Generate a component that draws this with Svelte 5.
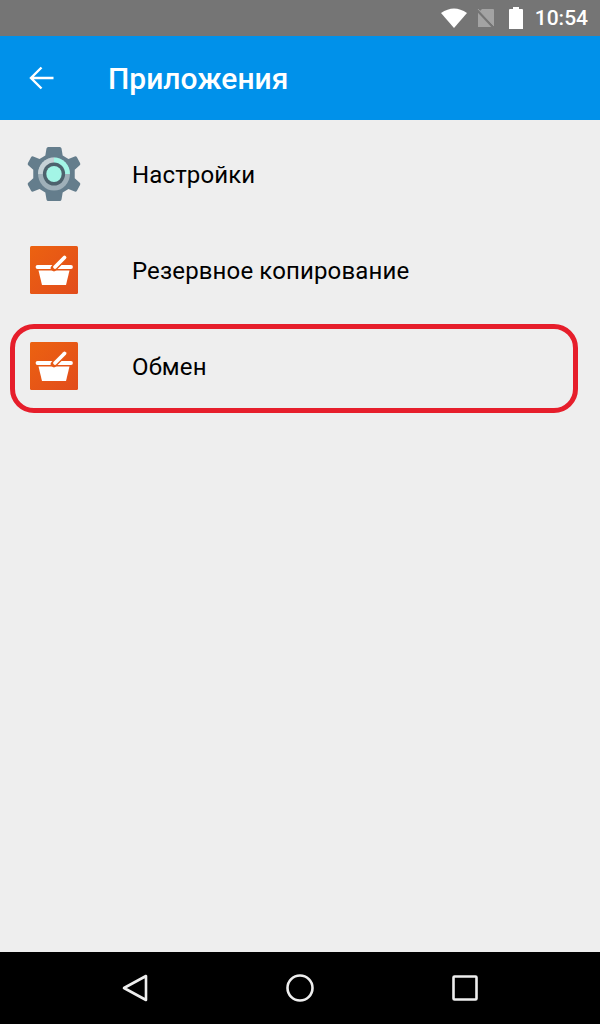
<script>
  const apps = [
    { name: "Настройки", icon: "gear" },
    { name: "Резервное копирование", icon: "basket" },
    { name: "Обмен", icon: "basket", marked: true },
  ];
</script>

<div class="screen">
  <div class="status">
    <svg class="wifi" width="26" height="20" viewBox="0 0 26 20">
      <path d="M13 20 L0 5 Q13 -4 26 5 Z" fill="#fff" />
    </svg>
    <svg class="sim" width="17" height="18" viewBox="0 0 17 18">
      <path d="M5 0 H16 Q17 0 17 1 V18 H1 V4 Z" fill="#a3a3a3" />
      <path d="M-1 0 L17 19" stroke="#757575" stroke-width="2.500" />
      <path d="M0 -1 L17 17" stroke="#a3a3a3" stroke-width="1" />
    </svg>
    <svg class="battery" width="14" height="22" viewBox="0 0 14 22">
      <path d="M4 2 V0 H10 V2 H13 Q14 2 14 3 V22 H0 V3 Q0 2 1 2 Z" fill="#fff" />
    </svg>
    <span class="clock">10:54</span>
  </div>

  <header class="appbar">
    <svg width="26" height="24" viewBox="0 0 26 24">
      <path d="M24.500 12 H3 M12.500 1.500 L2 12 L12.500 22.500" fill="none" stroke="#fff" stroke-width="2.400" />
    </svg>
    <h1>Приложения</h1>
  </header>

  <main class="list">
    {#each apps as app}
      <div class="row" class:marked={app.marked}>
        <div class="icon">
          {#if app.icon === "gear"}
            <svg width="54" height="56" viewBox="0 0 56 56" preserveAspectRatio="none">
              <path
                d="M22 1 H34 Q35.500 1 35.800 2.500 L37 9.500 L43 13 L49.500 10.500 Q51 10 51.800 11.300 L55 17 Q55.800 18.300 54.700 19.300 L49.500 23.800 V32.200 L54.700 36.700 Q55.800 37.700 55 39 L51.800 44.700 Q51 46 49.500 45.500 L43 43 L37 46.500 L35.800 53.500 Q35.500 55 34 55 H22 Q20.500 55 20.200 53.500 L19 46.500 L13 43 L6.500 45.500 Q5 46 4.200 44.700 L1 39 Q0.200 37.700 1.300 36.700 L6.500 32.200 V23.800 L1.300 19.300 Q0.200 18.300 1 17 L4.200 11.300 Q5 10 6.500 10.500 L13 13 L19 9.500 L20.200 2.500 Q20.500 1 22 1 Z"
                fill="#647d8c"
              />
              <circle cx="28" cy="28" r="16.500" fill="#9fb0b9" />
              <path d="M28 11.500 A16.500 16.500 0 0 1 44.500 28 L28 28 Z" fill="#a3f5e6" />
              <path d="M28 11.500 A16.500 16.500 0 0 0 11.500 28 L28 28 Z" fill="#c5d1d6" />
              <circle cx="28" cy="28" r="11.500" fill="#4d626d" />
              <circle cx="28" cy="28" r="8" fill="#a3f5e6" />
            </svg>
          {:else}
            <svg width="48" height="48" viewBox="0 0 48 48">
              <defs>
                <linearGradient id="tile" x1="0" y1="0" x2="1" y2="1">
                  <stop offset="0" stop-color="#ec6210" />
                  <stop offset="1" stop-color="#e24c1c" />
                </linearGradient>
              </defs>
              <rect width="48" height="48" rx="1.500" fill="url(#tile)" />
              <path d="M7.500 21 H41" stroke="#fff" stroke-width="3.800" stroke-linecap="round" />
              <path d="M8.500 24.500 H39.500 L36 39 H12 Z" fill="#fff" />
              <path d="M24 22 L34.500 11.500" stroke="#e85a15" stroke-width="6.500" stroke-linecap="round" />
              <path d="M25 21 L34.500 11.500" stroke="#fff" stroke-width="3.800" stroke-linecap="round" />
            </svg>
          {/if}
        </div>
        <span class="label">{app.name}</span>
      </div>
    {/each}
  </main>

  <nav class="navbar">
    <svg width="26" height="28" viewBox="0 0 26 28">
      <path d="M24 2 V26 L2 14 Z" fill="none" stroke="#eee" stroke-width="2.600" stroke-linejoin="round" />
    </svg>
    <svg width="28" height="28" viewBox="0 0 28 28">
      <circle cx="14" cy="14" r="12.500" fill="none" stroke="#eee" stroke-width="2.600" />
    </svg>
    <svg width="26" height="26" viewBox="0 0 26 26">
      <rect x="1.500" y="1.500" width="23" height="23" rx="1" fill="none" stroke="#eee" stroke-width="2.600" />
    </svg>
  </nav>
</div>

<style>
  :global(body) {
    margin: 0;
    background: #eeeeee;
  }

  .screen {
    display: flex;
    flex-direction: column;
    width: 600px;
    height: 1024px;
    overflow: hidden;
    background: #eeeeee;
    font-family: Roboto, "Noto Sans", sans-serif;
  }

  .status {
    display: flex;
    align-items: center;
    justify-content: flex-end;
    height: 36px;
    padding-right: 12px;
    background: #757575;
    color: #fff;
    box-sizing: border-box;
  }

  .wifi {
    margin-right: 10px;
  }

  .sim {
    margin-right: 15px;
  }

  .battery {
    margin-right: 12px;
  }

  .clock {
    font-size: 21px;
    font-weight: 500;
  }

  .appbar {
    display: flex;
    align-items: center;
    height: 84px;
    padding-left: 29px;
    background: #0091ea;
    color: #fff;
    box-sizing: border-box;
  }

  .appbar h1 {
    margin: 0 0 0 53px;
    font-size: 30px;
    font-weight: 500;
  }

  .list {
    flex: 1;
    padding-top: 6px;
  }

  .row {
    position: relative;
    display: flex;
    align-items: center;
    height: 96px;
  }

  .marked::after {
    content: "";
    position: absolute;
    left: 10px;
    top: 6px;
    width: 568px;
    height: 89px;
    box-sizing: border-box;
    border: 5px solid #e61e2b;
    border-radius: 24px;
  }

  .icon {
    display: flex;
    align-items: center;
    justify-content: center;
    width: 56px;
    margin-left: 26px;
  }

  .label {
    margin-left: 50px;
    padding-top: 2px;
    font-size: 24px;
    letter-spacing: 0.13px;
    color: #000;
  }

  .navbar {
    display: flex;
    align-items: center;
    justify-content: space-between;
    height: 72px;
    padding: 0 122px;
    background: #000;
    box-sizing: border-box;
  }
</style>
